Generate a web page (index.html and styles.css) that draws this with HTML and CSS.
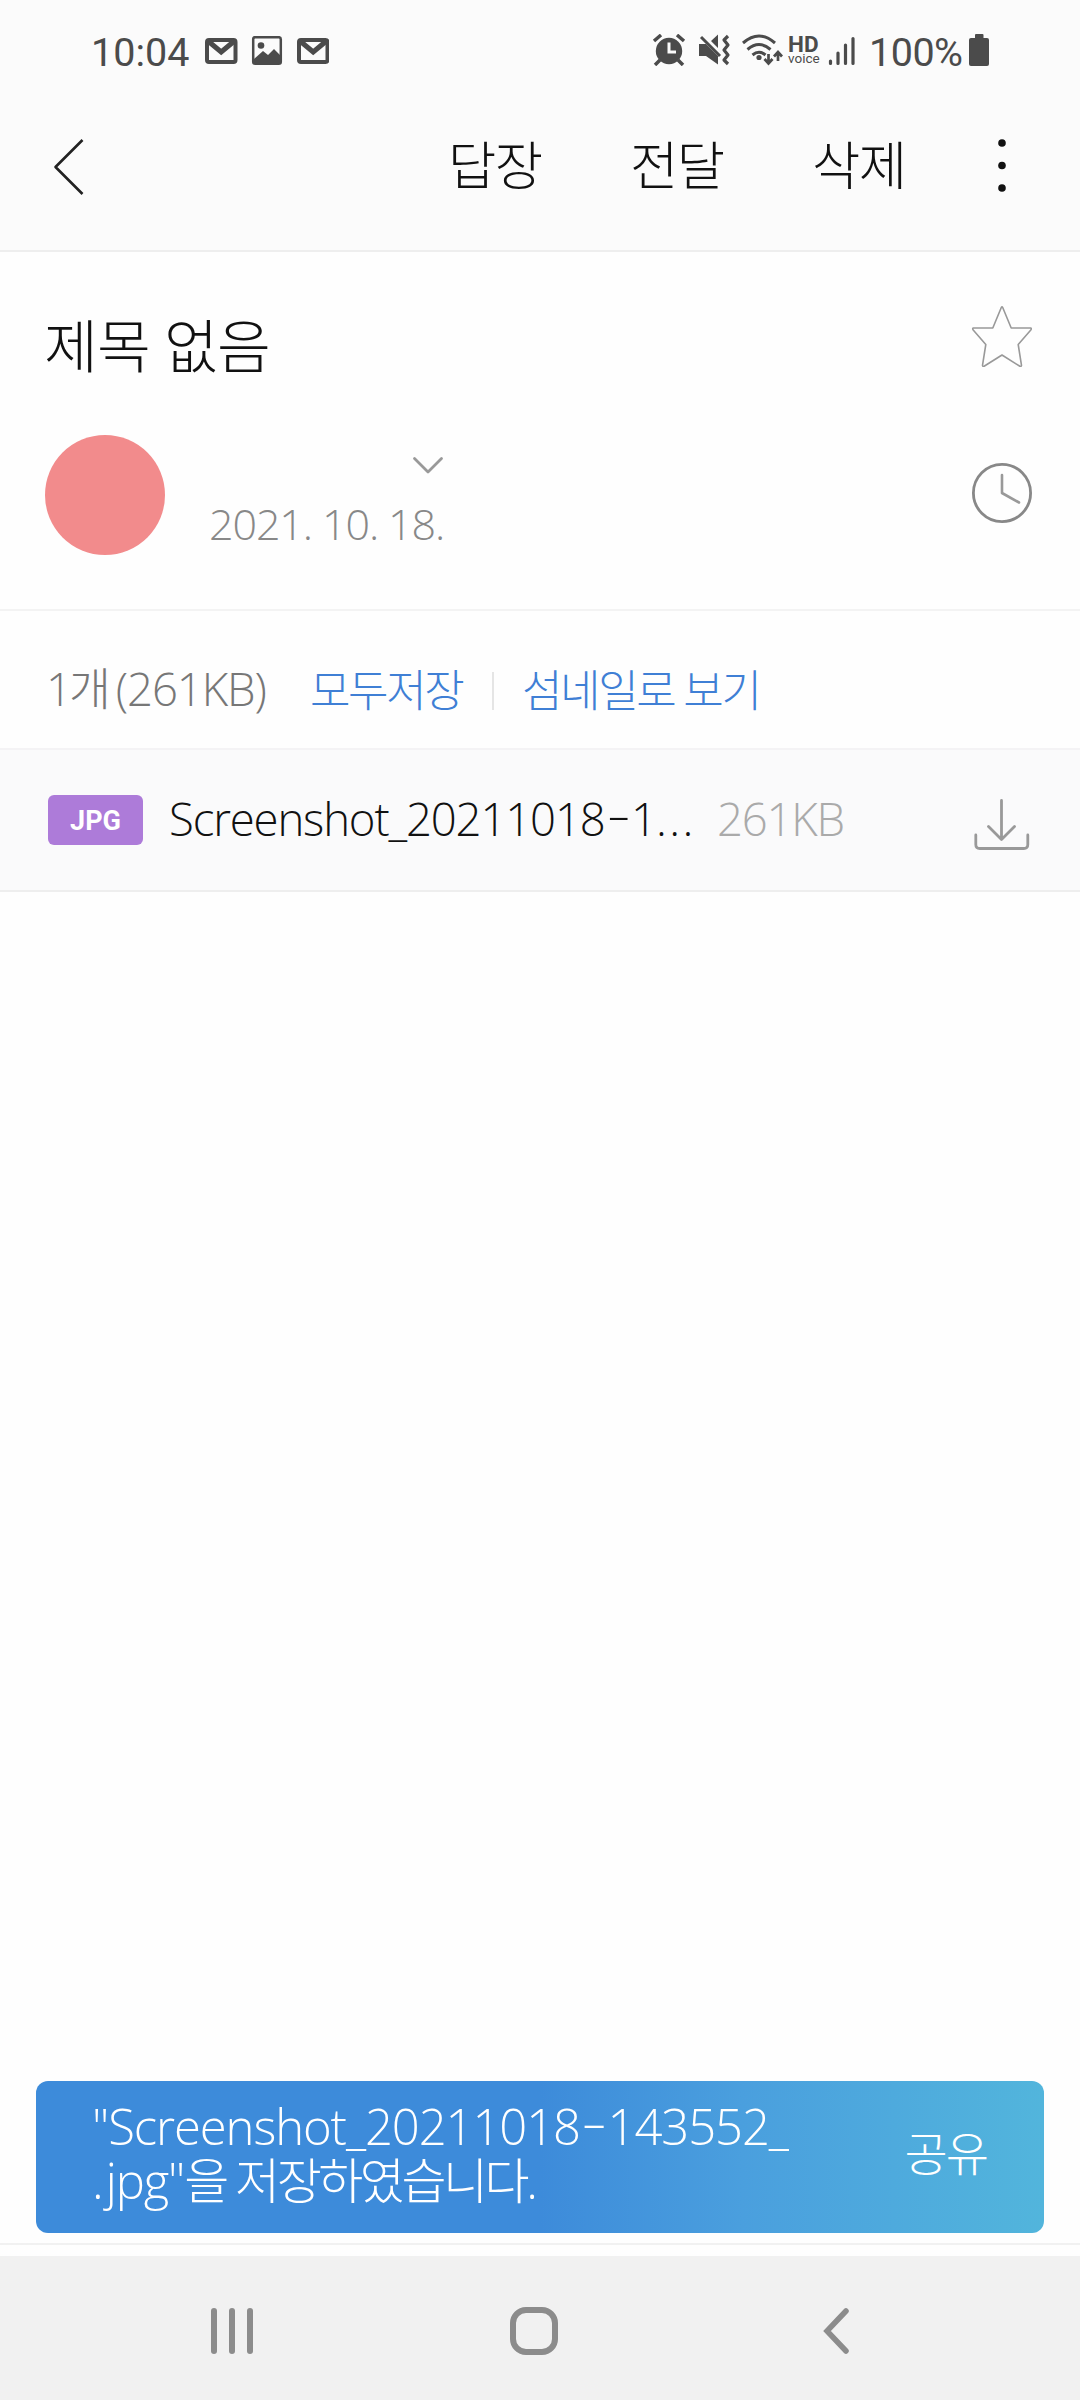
FILE: index.html
```html
<!DOCTYPE html>
<html lang="ko">
<head>
<meta charset="utf-8">
<title>제목 없음</title>
<link rel="stylesheet" href="styles.css">
</head>
<body>
<div class="status">
  <span class="clock-text">10:04</span>
  <svg class="notices" width="124" height="30" viewBox="205 36 124 30" fill="none" stroke="#4b4b4b">
    <g id="mail"><rect x="207" y="40" width="28.5" height="22" rx="2" stroke-width="4"/><path d="M208 41l13.2 11 13.2-11" stroke-width="5"/></g>
    <rect x="253.200" y="37.200" width="27.600" height="26.600" rx="2" stroke-width="2.500"/>
    <path d="M254 59l9-8 5 4 6-6 7 7v8h-27z" fill="#4b4b4b" stroke="none"/><circle cx="261" cy="45.500" r="3.300" fill="#4b4b4b" stroke="none"/>
    <use href="#mail" x="92"/>
  </svg>
  <svg class="radios" width="131" height="32" viewBox="652 34 131 32" fill="none" stroke="#4b4b4b">
    <circle cx="669" cy="51" r="13.200" fill="#4b4b4b" stroke="none"/>
    <path d="M654 41l7-6M684 41l-7-6M660 60l-5 5M678 60l5 5" stroke-width="3.500"/>
    <path d="M669 42.500v9.500h7" stroke="#fbfbfb" stroke-width="3"/>
    <path d="M699 44h7l12 12v8.500L706 56h-7zM711 41l7-6.500V48z" fill="#4b4b4b" stroke="none"/>
    <path d="M701 37l19 19" stroke-width="3"/>
    <path d="M728 36l-4 4 4 5-4 5 4 5-4 5 4 4" stroke-width="3.200" stroke-linejoin="round"/>
    <path d="M743 43q16-14 32 0M747.500 49.500q11.500-10 23 0M752.500 55q6.500-5.500 13 0" stroke-width="3"/>
    <circle cx="759" cy="57.500" r="2.600" fill="#4b4b4b" stroke="none"/>
    <path d="M768.500 54v9M764.500 59l4 4.500 4-4.500M778 61v-9M774 56.500l4-4.500 4 4.500" stroke-width="2.700"/>
  </svg>
  <div class="hd"><b>HD</b><span>voice</span></div>
  <svg class="signal" width="27" height="30" viewBox="828 36 27 30" stroke="#4b4b4b" stroke-width="3.200" stroke-linecap="round"><path d="M830.500 61v2.500M838 53v10.500M845.500 45v18.500M853 38.500v25"/></svg>
  <span class="percent">100%</span>
  <svg class="battery" width="20" height="32" viewBox="0 0 20 32" fill="#4b4b4b"><rect y="4" width="20" height="28" rx="2"/><rect x="6" width="8.500" height="6" rx="1"/></svg>
</div>

<div class="toolbar">
  <svg class="back" width="32" height="60" viewBox="53 137 32 60" fill="none" stroke="#222" stroke-width="2.600" stroke-linejoin="round"><path d="M82.500 140L55.500 167l27 27"/></svg>
  <span class="action">답장</span><span class="action">전달</span><span class="action">삭제</span>
  <svg class="more" width="10" height="56" viewBox="0 0 10 56" fill="#111"><circle cx="5" cy="6" r="3.800"/><circle cx="5" cy="28.500" r="3.800"/><circle cx="5" cy="51" r="3.800"/></svg>
</div>

<div class="subject">
  <div class="title-row">
    <h1>제목 없음</h1>
    <svg width="62" height="62" viewBox="971 305 62 62" fill="none" stroke="#999" stroke-width="1.600" stroke-linejoin="round"><path d="M1001.400 307.300q.6-1.200 1.200 0l8.600 20.700h19.600q1 .6 0 2l-12.600 14.500 3.300 20.800q-.3 1.500-1.600 1L1002 355l-17.900 11.300q-1.300.5-1.600-1l3.300-20.800L973.200 330q-1-1.400 0-2h19.600z"/></svg>
  </div>
  <div class="sender">
    <div class="avatar"></div>
    <div class="meta">
      <svg width="34" height="20" viewBox="411 455 34 20" fill="none" stroke="#999" stroke-width="2.800" stroke-linecap="round" stroke-linejoin="round"><path d="M414.500 458.500L428 472l13.500-13.500"/></svg>
      <span class="date">2021. 10. 18.</span>
    </div>
    <svg class="schedule" width="62" height="62" viewBox="971 462 62 62" fill="none" stroke="#888" stroke-width="2.800" stroke-linecap="round" stroke-linejoin="round"><circle cx="1002" cy="493" r="28.600"/><path d="M1002 475v18l17 9.500" stroke="#999" stroke-width="2.600"/></svg>
  </div>
</div>

<div class="summary">
  <span class="count">1<span class="ko">개</span>(261KB)</span>
  <span class="link all">모두저장</span>
  <i class="divider"></i>
  <span class="link thumbs">섬네일로 보기</span>
</div>
<div class="file">
  <span class="badge">JPG</span>
  <span class="name">Screenshot_20211018<span class="hyphen">-</span>1<span class="dots">...</span></span>
  <span class="size">261KB</span>
  <svg class="download" width="58" height="54" viewBox="973 797 58 54" fill="none" stroke="#999" stroke-width="2.800" stroke-linecap="round" stroke-linejoin="round"><path d="M1001.500 800.500v38.500M988.500 826.500l13 13 13-13M975.800 835v9.500q0 4 4 4h44q4 0 4-4V835"/></svg>
</div>

<div class="body"></div>

<div class="toast">
  <p><span class="line1">"Screenshot_20211018<span class="hyphen">-</span>143552_</span><span class="line2"><span class="dot">.</span>jpg"<span class="kor">을 저장하였습니다.</span></span></p>
  <span class="share">공유</span>
</div>
<div class="bottom-line"></div>
<div class="nav">
  <svg class="recents" width="42" height="46" viewBox="0 0 42 46" fill="#8c8c8c"><rect width="6" height="46" rx="3"/><rect x="18" width="6" height="46" rx="3"/><rect x="36" width="6" height="46" rx="3"/></svg>
  <svg class="home" width="48" height="48" viewBox="0 0 48 48" fill="none" stroke="#8c8c8c" stroke-width="6"><rect x="3" y="3" width="42" height="42" rx="13"/></svg>
  <svg class="nav-back" width="28" height="48" viewBox="0 0 28 48" fill="none" stroke="#8c8c8c" stroke-width="5.500" stroke-linecap="round"><path d="M23 4L4 24l19 20"/></svg>
</div>
</body>
</html>
```

FILE: styles.css
```css
* { box-sizing: border-box; }
body {
  margin: 0; width: 1080px; height: 2400px; overflow: hidden;
  display: flex; flex-direction: column; background: #fefefe; color: #111;
  font-family: "Open Sans", "Noto Sans CJK KR", sans-serif; font-weight: 300;
  white-space: nowrap;
}
svg { display: block; flex: none; }
.status {
  height: 102px; padding: 0 0 0 91px; display: flex; align-items: flex-start;
  background: #fbfbfb; color: #4b4b4b; font-family: Roboto, sans-serif; font-weight: 400;
}
.clock-text, .percent { font-size: 39.5px; line-height: 46px; margin-top: 30px; font-weight: 400; }
.clock-text { width: 114px; }
.notices { margin-top: 36px; }
.radios { margin: 34px 0 0 323px; }
.hd { width: 33px; margin: 35px 0 0 5px; display: flex; flex-direction: column; }
.hd b { font-size: 22.5px; line-height: 18px; font-weight: 700; }
.hd span { font-size: 13.5px; line-height: 12px; margin-top: -1px; font-weight: 400; }
.signal { margin: 36px 0 0 7px; }
.percent { width: 100px; margin-left: 14px; letter-spacing: -0.5px; }
.battery { margin: 34px 0 0 0; }
.toolbar {
  height: 150px; padding: 35px 0 0 53px; display: flex; align-items: flex-start;
  background: #fbfbfb; border-bottom: 2px solid #eee;
}
.back { margin-right: 363px; }
.action { width: 182px; margin-top: -2px; font-size: 52.5px; line-height: 60px; letter-spacing: -1.5px; }
.more { margin: 0 0 0 3px; }
.subject { height: 359px; padding-top: 53px; border-bottom: 2px solid #f3f3f3; }
.title-row { display: flex; height: 130px; padding: 0 47px 0 44px; justify-content: space-between; }
h1 { margin: 5px 0 0; font-size: 58.5px; line-height: 70px; font-weight: 300; letter-spacing: -0.9px; }
.sender { display: flex; padding: 0 47px 0 45px; }
.avatar { width: 120px; height: 120px; border-radius: 50%; background: #f28b8c; }
.meta { width: 240px; margin: 20px 0 0 44px; display: flex; flex-direction: column; }
.meta svg { margin-left: 202px; }
.date { font-size: 43px; line-height: 60px; margin-top: 19px; color: #888; letter-spacing: -1.1px; }
.schedule { margin: 27px 0 0 auto; }
.summary { height: 137px; padding: 45px 0 0 46px; display: flex; font-size: 45.5px; line-height: 64px; color: #777; }
.count { width: 264px; letter-spacing: -1.1px; }
.count .ko { margin-left: -2px; letter-spacing: 5px; }
.link { margin-top: 2px; color: #3f7fd5; font-size: 44px; letter-spacing: -2.4px; }
.all { width: 182px; }
.divider { width: 2px; height: 38px; margin: 16px 28px 0 0; background: #e5e5e5; }
.file {
  height: 144px; padding: 0 47px 0 48px; display: flex; align-items: flex-start;
  background: #fafafb; border-top: 2px solid #f4f3f5; border-bottom: 2px solid #eee;
}
.badge {
  width: 95px; height: 50px; margin-top: 45px; border-radius: 6px; background: #ad7bd9; color: #fff;
  font: 700 27px/52px Roboto, sans-serif; text-align: center;
}
.name { width: 548px; margin: 36px 0 0 26px; font-size: 45.5px; line-height: 64px; letter-spacing: -1.15px; }
.hyphen { display: inline-block; margin: 0 7px 0 6px; transform: translateY(-5px) scaleX(1.6); }
.dots { letter-spacing: 2.5px; }
.size { margin-top: 36px; font-size: 45.5px; line-height: 64px; color: #aaa; letter-spacing: -1.2px; }
.download { margin: 47px 2px 0 auto; }
.body { flex: 1; }
.toast {
  height: 152px; margin: 0 36px; padding: 0 57px; display: flex; align-items: flex-start;
  border-radius: 12px; color: #fff;
  background: linear-gradient(90deg, #3d8bda 0%, #3d8bda 50%, #4a9fde 70%, #52b5dc 100%);
}
.toast p { margin: 18px 0 0 -1px; width: 814px; font-size: 49px; line-height: 54px; letter-spacing: -1.1px; }
.line1, .line2 { display: block; }
.dot { letter-spacing: 2px; }
.kor { letter-spacing: -3.5px; }
.share { margin-top: 42px; font-size: 47px; line-height: 60px; letter-spacing: -2px; }
.bottom-line { height: 2px; margin: 10px 0 11px; background: #f1f1f1; }
.nav { height: 144px; padding: 51px 0 0 211px; display: flex; background: #f1f1f1; }
.recents { margin-top: 1px; }
.home { margin-left: 257px; }
.nav-back { margin-left: 265px; }
```
